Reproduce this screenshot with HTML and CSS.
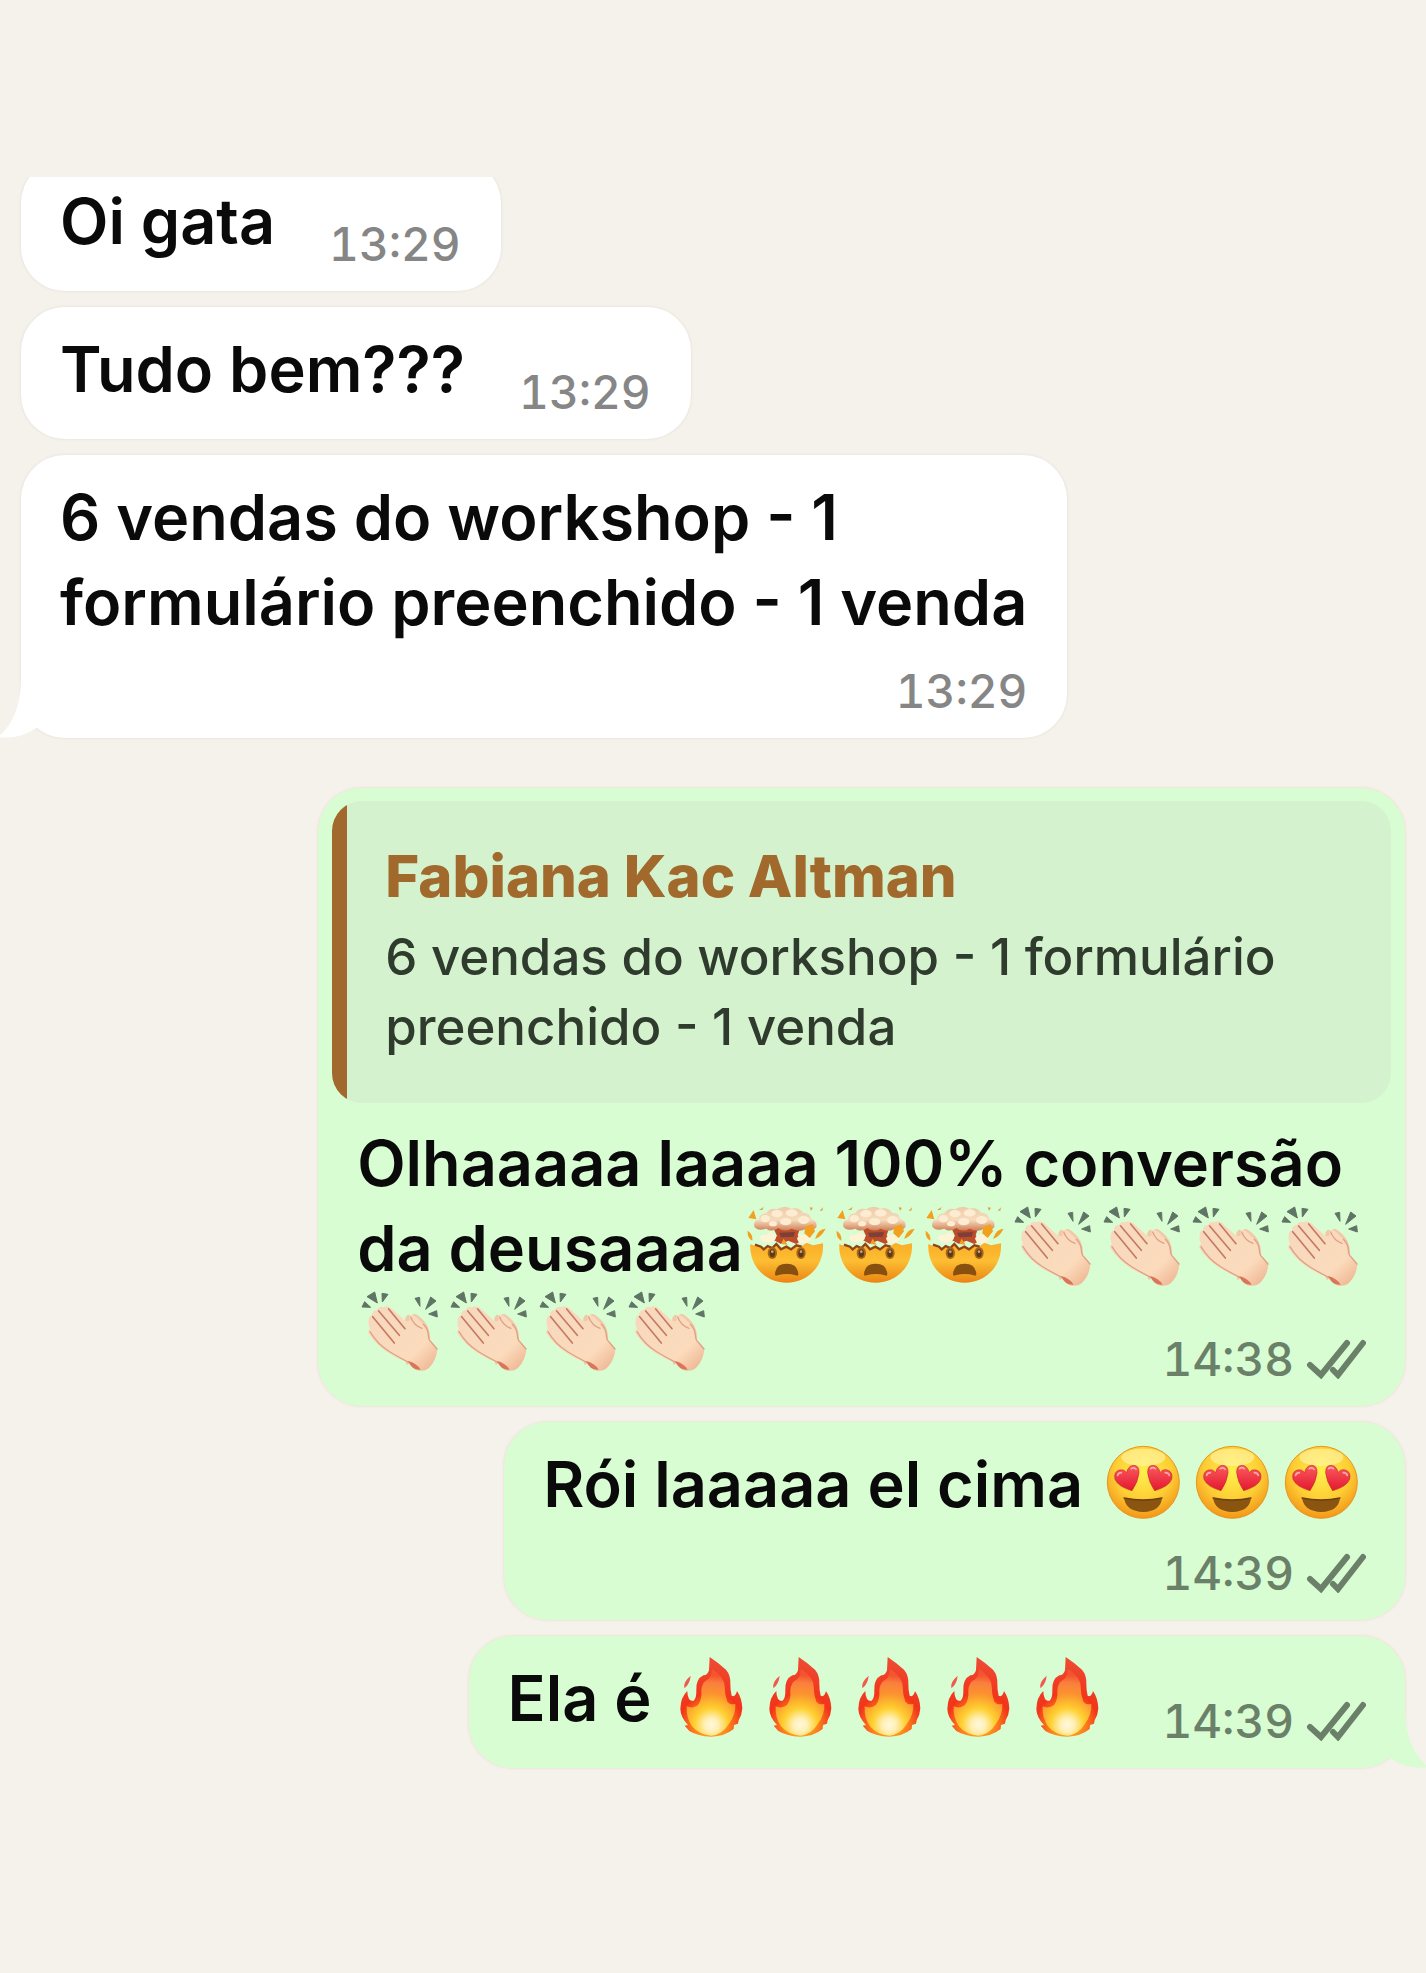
FILE: index.html
```
<!DOCTYPE html>
<html lang="pt-BR">
<head>
    <meta charset="UTF-8">
    <meta name="viewport" content="width=device-width, initial-scale=1.0">
    <title>Conversa</title>
    <link rel="stylesheet" href="styles.css">
</head>
<body>
    <!-- Emojis e ícones -->
    <svg class="sprite" aria-hidden="true">
        <defs>
            <radialGradient id="face-fill" cx="50%" cy="35%" r="65%">
                <stop offset="0" stop-color="#fff04e"/>
                <stop offset="0.6" stop-color="#fdce34"/>
                <stop offset="1" stop-color="#f3961a"/>
            </radialGradient>
            <linearGradient id="head-fill" x1="0" y1="0" x2="0" y2="1">
                <stop offset="0" stop-color="#f9ad28"/>
                <stop offset="0.45" stop-color="#fdbe33"/>
                <stop offset="1" stop-color="#ea8513"/>
            </linearGradient>
            <linearGradient id="cloud-fill" x1="0" y1="0" x2="0" y2="1">
                <stop offset="0" stop-color="#eccbaa"/>
                <stop offset="0.55" stop-color="#f6dcbc"/>
                <stop offset="1" stop-color="#cf7f58"/>
            </linearGradient>
            <linearGradient id="heart-fill" x1="0" y1="0" x2="0" y2="1">
                <stop offset="0" stop-color="#fb5a5f"/>
                <stop offset="1" stop-color="#e3182f"/>
            </linearGradient>
            <radialGradient id="flame-outer" gradientUnits="userSpaceOnUse" cx="150" cy="250" r="190">
                <stop offset="0" stop-color="#ffd21f"/>
                <stop offset="0.3" stop-color="#fb7a1c"/>
                <stop offset="0.5" stop-color="#f2351a"/>
                <stop offset="1" stop-color="#ee4a33"/>
            </radialGradient>
            <radialGradient id="flame-inner" gradientUnits="userSpaceOnUse" cx="150" cy="252" r="150">
                <stop offset="0" stop-color="#ffffff"/>
                <stop offset="0.14" stop-color="#fffbd0"/>
                <stop offset="0.34" stop-color="#ffdc33"/>
                <stop offset="0.62" stop-color="#fda432"/>
                <stop offset="0.85" stop-color="#fb8b42"/>
                <stop offset="1" stop-color="#fb8b42" stop-opacity="0.3"/>
            </radialGradient>
            <linearGradient id="hand-fill" x1="0" y1="0" x2="1" y2="1">
                <stop offset="0" stop-color="#f7d8be"/>
                <stop offset="0.7" stop-color="#fbdbbc"/>
                <stop offset="1" stop-color="#ecae8a"/>
            </linearGradient>
        </defs>

        <symbol id="mind-blown" viewBox="36 54 267 243">
            <path d="M58 168 Q70 176 84 172 L96 182 L110 174 L124 178 L136 168 L150 182 L166 176 L180 184 L196 172 L210 176 L226 164 L246 172 L276 166 C280 232 232 284 167 284 C102 284 54 232 58 168Z" fill="url(#head-fill)"/>
            <path d="M72 170 L90 176 L98 184 L110 174 L124 180 L136 168 L150 184 L166 176 L180 184 L196 172 L212 176" fill="none" stroke="#8f4418" stroke-width="7"/>
            <path d="M126 118 H208 L200 142 L214 156 L196 168 L172 158 L150 168 L128 156 L138 144Z" fill="#bd4d2a"/>
            <path d="M144 134 L192 132 L188 146 L150 148Z" fill="#7d4038"/>
            <path d="M86 150 Q92 136 106 142 Q114 128 128 138 Q140 144 132 156 L116 164 L96 162Z M198 152 Q206 134 220 142 Q236 136 240 154 L226 166 L204 164Z" fill="#fff3d6"/>
            <path d="M70 116 Q66 98 84 94 Q86 76 106 76 Q116 58 138 64 Q160 50 180 62 Q206 56 216 74 Q238 74 240 92 Q260 98 256 118 Q248 130 224 122 Q206 134 182 122 Q160 134 142 120 Q122 134 106 122 Q80 130 70 116Z" fill="url(#cloud-fill)"/>
            <g fill="#fdecd2">
                <ellipse cx="103" cy="92" rx="14" ry="11"/>
                <ellipse cx="138" cy="77" rx="17" ry="11"/>
                <ellipse cx="182" cy="75" rx="18" ry="11"/>
                <ellipse cx="218" cy="96" rx="17" ry="12"/>
                <ellipse cx="164" cy="101" rx="17" ry="11"/>
                <ellipse cx="126" cy="107" rx="12" ry="8"/>
            </g>
            <path d="M52 90 L68 66 L76 94Z M50 128 Q48 150 64 158 Q66 138 50 128Z M222 118 L244 108 L252 130 L236 150 L220 136Z M252 152 Q270 148 284 122 Q262 122 252 152Z M150 168 L158 152 L170 170Z" fill="#f3a01e"/>
            <path d="M84 66 L98 57 L94 66Z M236 58 L246 59 L240 68Z M266 68 L276 58 L274 68Z" fill="#d9a441"/>
            <ellipse cx="124" cy="195" rx="14" ry="18" fill="#a8631a"/>
            <ellipse cx="210" cy="195" rx="14" ry="18" fill="#a8631a"/>
            <ellipse cx="124" cy="196" rx="8" ry="12" fill="#5b3a16"/>
            <ellipse cx="210" cy="196" rx="8" ry="12" fill="#5b3a16"/>
            <circle cx="124" cy="191" r="4" fill="#c9a27a"/>
            <circle cx="210" cy="191" r="4" fill="#c9a27a"/>
            <path d="M132 258 Q134 227 167 227 Q200 227 202 258 Q202 266 194 262 Q168 254 140 262 Q132 266 132 258Z" fill="#87500f"/>
        </symbol>

        <symbol id="clap" viewBox="27 54 267 243">
            <g fill="#5f7465" stroke="#5f7465" stroke-width="3" stroke-linejoin="round">
                <path d="M42 102 L50 86 L68 103Z M57 71 L80 57 L88 90Z M102 61 L120 64 L103 87Z M201 76 L215 73 L216 100Z M248 72 L264 84 L233 109Z M242 123 L266 113 L268 132Z"/>
            </g>
            <path d="M172 135 Q178 122 184 126 L190 132 Q192 120 204 124 Q222 134 238 158 Q248 180 246 202 Q254 212 262 220 L204 262 Q190 270 176 276 Q168 256 174 244Z" fill="#f3c7a9"/>
            <path d="M62 142 Q62 130 72 126 Q72 112 86 111 Q94 98 106 103 Q118 95 130 106 L168 140 Q178 150 186 140 Q180 126 192 126 Q204 128 214 142 Q234 158 240 180 Q240 196 248 206 L268 228 Q266 262 242 286 Q226 298 204 291 Q190 284 182 268 Q148 258 116 236 Q84 214 62 182 Q58 172 66 168 Q60 156 62 142Z" fill="url(#hand-fill)"/>
            <g fill="none" stroke="#c47b62" stroke-width="5" stroke-linecap="round">
                <path d="M122 108 L171 167"/>
                <path d="M92 114 L154 187"/>
                <path d="M74 131 L139 210"/>
            </g>
            <g fill="none" stroke="#e0a184" stroke-width="4" stroke-linecap="round">
                <path d="M66 176 Q88 214 126 237 Q154 254 182 268"/>
                <path d="M188 132 Q198 158 222 166"/>
                <path d="M226 154 Q240 168 241 186 Q242 202 250 208 L267 228"/>
            </g>
            <path d="M180 264 Q206 270 218 290 Q192 292 180 264Z" fill="#d9765a"/>
        </symbol>

        <symbol id="heart-eyes" viewBox="55 66 267 243">
            <circle cx="188" cy="187" r="108" fill="url(#face-fill)" stroke="#e8941d" stroke-width="3"/>
            <ellipse cx="188" cy="112" rx="66" ry="26" fill="#fff9b8" opacity="0.55"/>
            <path d="M154 212 Q112 200 103 178 Q98 156 116 150 Q130 146 138 158 Q142 138 158 136 Q176 136 175 158 Q172 186 154 212Z" fill="url(#heart-fill)" stroke="#c92a2c" stroke-width="2"/>
            <path d="M222 212 Q264 200 273 178 Q278 156 260 150 Q246 146 238 158 Q234 138 218 136 Q200 136 201 158 Q204 186 222 212Z" fill="url(#heart-fill)" stroke="#c92a2c" stroke-width="2"/>
            <path d="M111 166 Q113 158 122 158 M152 146 Q160 140 166 148 M210 146 Q216 140 224 146 M254 158 Q263 158 266 166" fill="none" stroke="#ffa9a6" stroke-width="5" stroke-linecap="round"/>
            <path d="M130 234 Q188 246 244 234 Q240 274 188 276 Q136 274 130 234Z" fill="#8a5411"/>
            <path d="M130 234 Q188 246 244 234" fill="none" stroke="#6d3f0c" stroke-width="4" stroke-linecap="round"/>
        </symbol>

        <symbol id="fire" viewBox="17 45 267 243">
            <path d="M88 104 Q86 128 69 142 Q64 124 88 104Z" fill="#ee5a50"/>
            <path d="M145 48 Q172 66 194 86 Q208 102 207 128 Q207 150 211 164 Q222 170 227 150 Q242 172 243 202 Q242 222 232 238 L230 248 L218 252 L217 264 Q190 286 150 287 Q110 286 84 270 L70 254 L80 252 Q58 230 57 204 Q58 168 78 150 Q78 180 96 180 Q106 172 105 146 Q104 114 126 103 Q138 104 143 88Z" fill="url(#flame-outer)"/>
            <path d="M152 84 Q190 108 190 136 Q190 162 198 182 Q208 194 222 188 Q224 220 202 250 Q182 282 150 284 Q114 282 92 256 Q74 230 76 196 Q94 204 110 192 Q122 176 120 148 Q122 122 138 116 Q150 112 152 84Z" fill="url(#flame-inner)" opacity="0.85"/>
        </symbol>

        <symbol id="checks" viewBox="0 0 60 40">
            <path d="M4 26 L15 36 L41 4 M27 31 L32 36 L57 4" fill="none" stroke="currentColor" stroke-width="6" stroke-linecap="round"/>
        </symbol>
    </svg>

    <main class="chat">
        <section class="group received">
            <article class="bubble inline cut">
                <p class="text">Oi gata</p>
                <div class="meta"><time>13:29</time></div>
            </article>
            <article class="bubble inline">
                <p class="text">Tudo bem???</p>
                <div class="meta"><time>13:29</time></div>
            </article>
            <article class="bubble">
                <p class="text">6 vendas do workshop - 1<br>formulário preenchido - 1 venda</p>
                <div class="meta"><time>13:29</time></div>
                <svg class="tail" viewBox="0 0 42 60" aria-hidden="true"><path d="M21 0 Q21 40 -2 59 Q20 62 36 50 L42 46 V0Z"/></svg>
            </article>
        </section>

        <section class="group sent">
            <article class="bubble overlap">
                <blockquote class="quote">
                    <cite class="quote-name">Fabiana Kac Altman</cite>
                    <p class="quote-text">6 vendas do workshop - 1 formulário<br>preenchido - 1 venda</p>
                </blockquote>
                <p class="text">Olhaaaaa laaaa 100% conversão<br>da deusaaaa<svg class="emoji"><use href="#mind-blown"/></svg><svg class="emoji"><use href="#mind-blown"/></svg><svg class="emoji"><use href="#mind-blown"/></svg><svg class="emoji"><use href="#clap"/></svg><svg class="emoji"><use href="#clap"/></svg><svg class="emoji"><use href="#clap"/></svg><svg class="emoji"><use href="#clap"/></svg><br><svg class="emoji"><use href="#clap"/></svg><svg class="emoji"><use href="#clap"/></svg><svg class="emoji"><use href="#clap"/></svg><svg class="emoji"><use href="#clap"/></svg></p>
                <div class="meta"><time>14:38</time><svg class="checks"><use href="#checks"/></svg></div>
            </article>
            <article class="bubble">
                <p class="text">Rói laaaaa el cima <svg class="emoji"><use href="#heart-eyes"/></svg><svg class="emoji"><use href="#heart-eyes"/></svg><svg class="emoji"><use href="#heart-eyes"/></svg></p>
                <div class="meta"><time>14:39</time><svg class="checks"><use href="#checks"/></svg></div>
            </article>
            <article class="bubble inline">
                <p class="text">Ela é <svg class="emoji"><use href="#fire"/></svg><svg class="emoji"><use href="#fire"/></svg><svg class="emoji"><use href="#fire"/></svg><svg class="emoji"><use href="#fire"/></svg><svg class="emoji"><use href="#fire"/></svg></p>
                <div class="meta"><time>14:39</time><svg class="checks"><use href="#checks"/></svg></div>
                <svg class="tail" viewBox="0 0 42 60" aria-hidden="true"><path d="M21 0 Q21 40 -2 59 Q20 62 36 50 L42 46 V0Z"/></svg>
            </article>
        </section>
    </main>
</body>
</html>
```
FILE: styles.css
```
* {
    box-sizing: border-box;
}

body {
    margin: 0;
    padding: 177px 0;
    background-color: #f5f1eb;
    font-family: Inter, "Liberation Sans", sans-serif;
    font-weight: 500;
    color: #0a0a0a;
}

.sprite {
    position: absolute;
    width: 0;
    height: 0;
}

.chat {
    display: flex;
    flex-direction: column;
    gap: 50px;
    padding: 0 21px 36px;
    overflow: hidden;
}

.group {
    display: flex;
    flex-direction: column;
    align-items: flex-start;
    gap: 16px;
}

.sent {
    align-items: flex-end;
}

.bubble {
    position: relative;
    display: flex;
    flex-direction: column;
    gap: 21px;
    min-height: 132px;
    padding: 20px 40px 22px 39px;
    border-radius: 44px;
    background-color: #fff;
    box-shadow: 0 0 2px 1px #ebe7e0;
}

.sent .bubble {
    padding-right: 39px;
    background-color: #d8fdd2;
    box-shadow: 0 0 2px 1px #eee6da;
}

.bubble.inline {
    flex-direction: row;
    gap: 54px;
}

.sent .bubble.inline {
    gap: 50px;
}

.cut {
    margin-top: -18px;
}

.text {
    margin: 0;
    font-size: 63px;
    font-weight: 600;
    line-height: 85px;
    white-space: nowrap;
}

.emoji {
    width: 89px;
    height: 81px;
    vertical-align: -16px;
}

.meta {
    display: flex;
    align-self: flex-end;
    align-items: center;
    gap: 12px;
    font-size: 46px;
    font-variant-numeric: tabular-nums;
    line-height: 50px;
    color: #868686;
}

.sent .meta {
    color: #6a8068;
}

.checks {
    width: 60px;
    height: 40px;
}

/* the time sits on the last line of emojis */
.sent .bubble.overlap {
    gap: 18px;
    padding-top: 13px;
}

.overlap .meta {
    margin-top: -60px;
}

.quote {
    position: relative;
    margin: 0 -25px;
    padding: 40px 39px 41px 53px;
    border-radius: 30px;
    background-color: #d5f2cf;
    overflow: hidden;
}

.quote::before {
    content: "";
    position: absolute;
    top: 0;
    bottom: 0;
    left: 0;
    width: 15px;
    background-color: #a16a2c;
}

.quote-name {
    display: block;
    margin-bottom: 11px;
    font-size: 58px;
    font-style: normal;
    font-weight: 800;
    line-height: 70px;
    color: #a16a2c;
}

.quote-text {
    margin: 0;
    font-size: 51px;
    line-height: 70px;
    color: #2e3b2d;
}

.tail {
    position: absolute;
    bottom: 0;
    left: -21px;
    width: 42px;
    height: 60px;
    fill: #fff;
}

.sent .tail {
    right: -21px;
    left: auto;
    fill: #d8fdd2;
    transform: scaleX(-1);
}
```
